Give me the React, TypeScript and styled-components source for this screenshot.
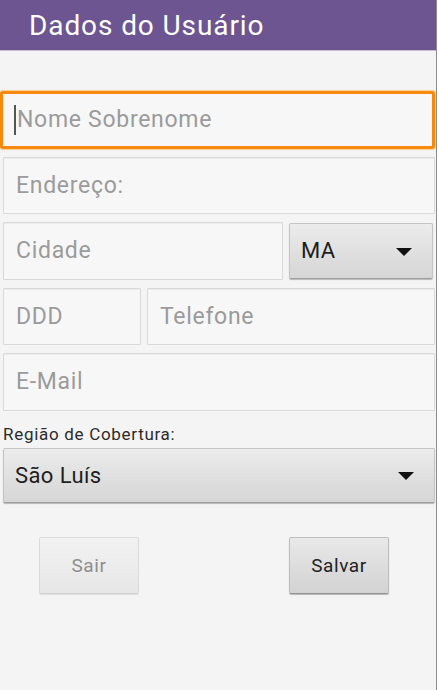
import React from 'react';
import styled, { createGlobalStyle } from 'styled-components';

const GlobalStyle = createGlobalStyle`
  html, body {
    margin: 0;
    padding: 0;
    background: #ffffff;
    font-family: Roboto, 'Noto Sans', sans-serif;
  }
`;

const Screen = styled.div`
  width: 437px;
  height: 690px;
  box-sizing: border-box;
  background: #f4f4f4;
  border-right: 1px solid #8c8c8c;
`;

const Header = styled.header`
  height: 50px;
  background: #6c5591;
  border-bottom: 1px solid #c7bdd5;
  display: flex;
  align-items: center;
  padding-left: 29px;
  color: #ffffff;
  font-size: 28px;
  letter-spacing: 0.9px;
`;

const Form = styled.div`
  display: flex;
  flex-direction: column;
  padding: 40px 1px 0 3px;
`;

const Row = styled.div`
  display: flex;
  gap: 6px;
  margin-bottom: 8px;
`;

const Field = styled.div<{ $width?: number; $focused?: boolean }>`
  position: relative;
  box-sizing: border-box;
  height: 57.5px;
  flex: ${(p) => (p.$width ? `0 0 ${p.$width}px` : '1')};
  display: flex;
  align-items: center;
  padding-left: ${(p) => (p.$focused ? '14px' : '12px')};
  background: #f7f7f7;
  border: ${(p) => (p.$focused ? '3px solid #f7890f' : '1px solid #d9d9d9')};
  border-radius: ${(p) => (p.$focused ? '3px' : '1px')};
  margin: ${(p) => (p.$focused ? '0 0 0 -3px' : '0')};
  box-shadow: ${(p) => (p.$focused ? '0 0 1px 1px rgba(255,170,60,0.5)' : 'inset 0 1px 0 #ececec')};
  color: #9b9b9b;
  font-size: 23px;
  letter-spacing: 0.7px;
`;

const Cursor = styled.span`
  width: 2px;
  height: 30px;
  background: #555;
  position: absolute;
  left: 11px;
  top: 11px;
`;

const Spinner = styled.div<{ $width?: number }>`
  box-sizing: border-box;
  flex: ${(p) => (p.$width ? `0 0 ${p.$width}px` : '1')};
  height: 55.5px;
  margin: 1px 0;
  display: flex;
  align-items: center;
  justify-content: space-between;
  padding: 0 20px 0 11px;
  background: linear-gradient(#ececec, #dedede 60%, #d6d6d6);
  border: 1px solid #c4c4c4;
  border-bottom-color: #9e9e9e;
  border-radius: 2px;
  box-shadow: 0 1px 1px rgba(0, 0, 0, 0.25);
  color: #1e1e1e;
  font-size: 22px;
  letter-spacing: 0.4px;
`;

const Arrow = styled.span`
  width: 0;
  height: 0;
  border-left: 8px solid transparent;
  border-right: 8px solid transparent;
  border-top: 8px solid #111;
  margin-top: 2px;
`;

const Label = styled.div`
  font-size: 17px;
  letter-spacing: 0.7px;
  color: #2b2b2b;
  height: 28px;
  display: flex;
  align-items: center;
  padding-top: 2px;
  box-sizing: border-box;
`;

const Buttons = styled.div`
  display: flex;
  justify-content: space-between;
  padding: 25px 47px 0 39px;
`;

const Button = styled.button<{ $disabled?: boolean }>`
  width: 100px;
  height: 57px;
  box-sizing: border-box;
  font-family: Roboto, 'Noto Sans', sans-serif;
  font-size: 19px;
  letter-spacing: 0.6px;
  color: ${(p) => (p.$disabled ? '#8e8e8e' : '#222222')};
  background: ${(p) =>
    p.$disabled
      ? 'linear-gradient(#f1f1f1, #ececec 55%, #e6e6e6)'
      : 'linear-gradient(#e9e9e9, #dcdcdc 55%, #d3d3d3)'};
  border: 1px solid ${(p) => (p.$disabled ? '#dcdcdc' : '#bdbdbd')};
  border-bottom-color: ${(p) => (p.$disabled ? '#cfcfcf' : '#939393')};
  border-radius: 2px;
  box-shadow: 0 1px 1px rgba(0, 0, 0, ${(p) => (p.$disabled ? 0.08 : 0.25)});
  padding: 0;
`;

export default function App() {
  return (
    <Screen>
      <GlobalStyle />
      <Header>Dados do Usuário</Header>
      <Form>
        <Row>
          <Field $focused>
            <Cursor />
            Nome Sobrenome
          </Field>
        </Row>
        <Row>
          <Field>Endereço:</Field>
        </Row>
        <Row>
          <Field $width={280}>Cidade</Field>
          <Spinner $width={144}>
            MA
            <Arrow />
          </Spinner>
        </Row>
        <Row>
          <Field $width={138}>DDD</Field>
          <Field>Telefone</Field>
        </Row>
        <Row>
          <Field>E-Mail</Field>
        </Row>
        <Label>Região de Cobertura:</Label>
        <Row>
          <Spinner>
            São Luís
            <Arrow />
          </Spinner>
        </Row>
      </Form>
      <Buttons>
        <Button $disabled>Sair</Button>
        <Button>Salvar</Button>
      </Buttons>
    </Screen>
  );
}
